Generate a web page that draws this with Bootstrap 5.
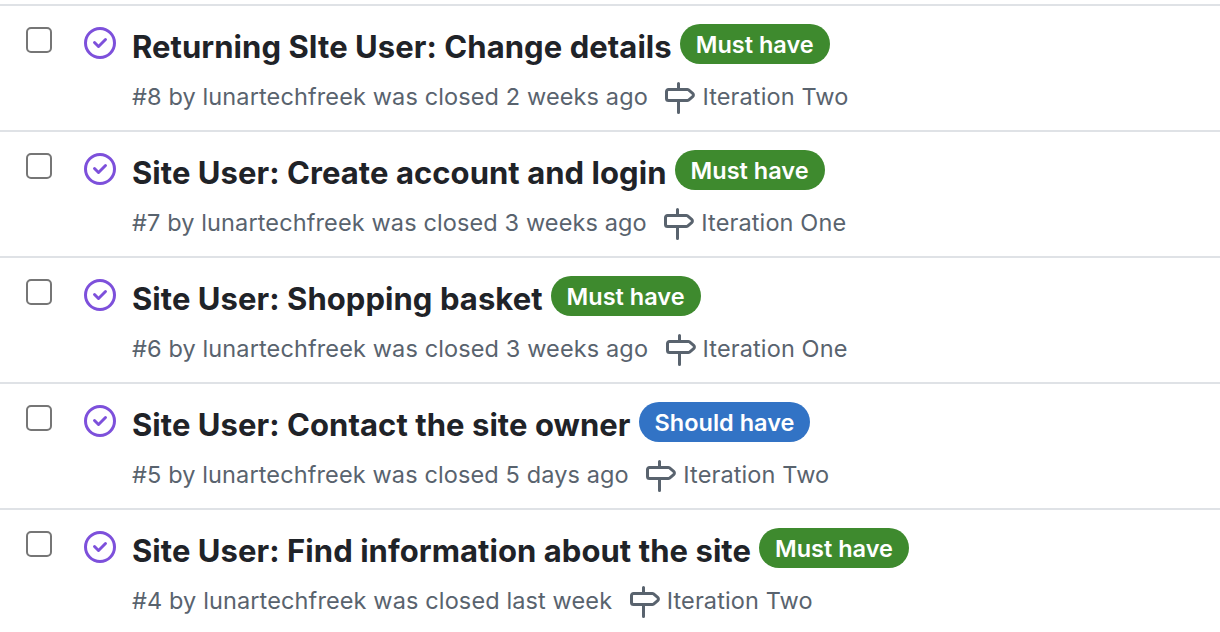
<!DOCTYPE html>
<html lang="en">
<head>
<meta charset="utf-8">
<meta name="viewport" content="width=device-width, initial-scale=1">
<title>Issues</title>
<link href="https://cdn.jsdelivr.net/npm/bootstrap@5.3.0/dist/css/bootstrap.min.css" rel="stylesheet">
<style>
  body { font-family: Inter, "Liberation Sans", sans-serif; overflow: hidden; background: #fff; }
  .issue-list { padding-top: 4px; }
  .issue { height: 126px; border-top: 2px solid #dfe2e6; padding-left: 26px; }
  .issue .form-check-input { width: 26px; height: 26px; margin: 21px 32px 0 0; border: 2px solid #767676; border-radius: 5px; }
  .state { width: 32px; height: 32px; margin: 21px 16px 0 0; fill: #7d50db; }
  .issue-title { font-size: 31px; font-weight: 650; line-height: 40px; color: #1f2328; margin-top: 21px; letter-spacing: .06px; }
  .issue-label { height: 40px; line-height: 42px; padding: 0 16px; margin: 18px 0 0 8px; font-size: 23.5px; font-weight: 600; color: #fff; background: #3e8a2e; }
  .issue-label.should { background: #3273c5; }
  .meta { margin-top: 12px; font-size: 23.5px; line-height: 36px; color: #59636e; letter-spacing: .12px; }
  .milestone { width: 32px; height: 32px; margin: 3px 7px 0 15.5px; fill: #59636e; }
</style>
</head>
<body>
<svg class="d-none">
  <symbol id="closed" viewBox="0 0 16 16"><path d="M11.28 6.78a.75.75 0 00-1.06-1.06L7.25 8.69 5.78 7.22a.75.75 0 00-1.06 1.06l2 2a.75.75 0 001.06 0l3.5-3.5z"/><path fill-rule="evenodd" d="M16 8A8 8 0 110 8a8 8 0 0116 0zm-1.5 0a6.5 6.5 0 11-13 0 6.5 6.5 0 0113 0z"/></symbol>
  <symbol id="sign" viewBox="0 0 16 16"><path fill-rule="evenodd" d="M7.75 0a.75.75 0 01.75.75V3h3.634c.414 0 .814.147 1.13.414l2.07 1.75a1.75 1.75 0 010 2.672l-2.07 1.75a1.75 1.75 0 01-1.13.414H8.5v5.25a.75.75 0 11-1.5 0V10H2.75A1.75 1.75 0 011 8.25v-3.5C1 3.784 1.784 3 2.75 3H7V.75A.75.75 0 017.75 0zm0 8.5h4.384a.25.25 0 00.161-.06l2.07-1.75a.25.25 0 000-.38l-2.07-1.75a.25.25 0 00-.161-.06H2.75a.25.25 0 00-.25.25v3.5c0 .138.112.25.25.25h5z"/></symbol>
</svg>
<main class="issue-list">
  <article class="issue d-flex align-items-start">
    <input class="form-check-input flex-shrink-0" type="checkbox" aria-label="Select issue 8">
    <svg class="state flex-shrink-0"><use href="#closed"/></svg>
    <div class="text-nowrap">
      <div class="d-flex align-items-start"><h2 class="issue-title mb-0">Returning SIte User: Change details</h2><span class="issue-label rounded-pill">Must have</span></div>
      <div class="meta d-flex align-items-start"><span>#8 by lunartechfreek was closed 2 weeks ago</span><svg class="milestone"><use href="#sign"/></svg><span>Iteration Two</span></div>
    </div>
  </article>
  <article class="issue d-flex align-items-start">
    <input class="form-check-input flex-shrink-0" type="checkbox" aria-label="Select issue 7">
    <svg class="state flex-shrink-0"><use href="#closed"/></svg>
    <div class="text-nowrap">
      <div class="d-flex align-items-start"><h2 class="issue-title mb-0">Site User: Create account and login</h2><span class="issue-label rounded-pill">Must have</span></div>
      <div class="meta d-flex align-items-start"><span>#7 by lunartechfreek was closed 3 weeks ago</span><svg class="milestone"><use href="#sign"/></svg><span>Iteration One</span></div>
    </div>
  </article>
  <article class="issue d-flex align-items-start">
    <input class="form-check-input flex-shrink-0" type="checkbox" aria-label="Select issue 6">
    <svg class="state flex-shrink-0"><use href="#closed"/></svg>
    <div class="text-nowrap">
      <div class="d-flex align-items-start"><h2 class="issue-title mb-0">Site User: Shopping basket</h2><span class="issue-label rounded-pill">Must have</span></div>
      <div class="meta d-flex align-items-start"><span>#6 by lunartechfreek was closed 3 weeks ago</span><svg class="milestone"><use href="#sign"/></svg><span>Iteration One</span></div>
    </div>
  </article>
  <article class="issue d-flex align-items-start">
    <input class="form-check-input flex-shrink-0" type="checkbox" aria-label="Select issue 5">
    <svg class="state flex-shrink-0"><use href="#closed"/></svg>
    <div class="text-nowrap">
      <div class="d-flex align-items-start"><h2 class="issue-title mb-0">Site User: Contact the site owner</h2><span class="issue-label should rounded-pill">Should have</span></div>
      <div class="meta d-flex align-items-start"><span>#5 by lunartechfreek was closed 5 days ago</span><svg class="milestone"><use href="#sign"/></svg><span>Iteration Two</span></div>
    </div>
  </article>
  <article class="issue d-flex align-items-start">
    <input class="form-check-input flex-shrink-0" type="checkbox" aria-label="Select issue 4">
    <svg class="state flex-shrink-0"><use href="#closed"/></svg>
    <div class="text-nowrap">
      <div class="d-flex align-items-start"><h2 class="issue-title mb-0">Site User: Find information about the site</h2><span class="issue-label rounded-pill">Must have</span></div>
      <div class="meta d-flex align-items-start"><span>#4 by lunartechfreek was closed last week</span><svg class="milestone"><use href="#sign"/></svg><span>Iteration Two</span></div>
    </div>
  </article>
</main>
<script src="https://cdn.jsdelivr.net/npm/bootstrap@5.3.0/dist/js/bootstrap.bundle.min.js"></script>
</body>
</html>
